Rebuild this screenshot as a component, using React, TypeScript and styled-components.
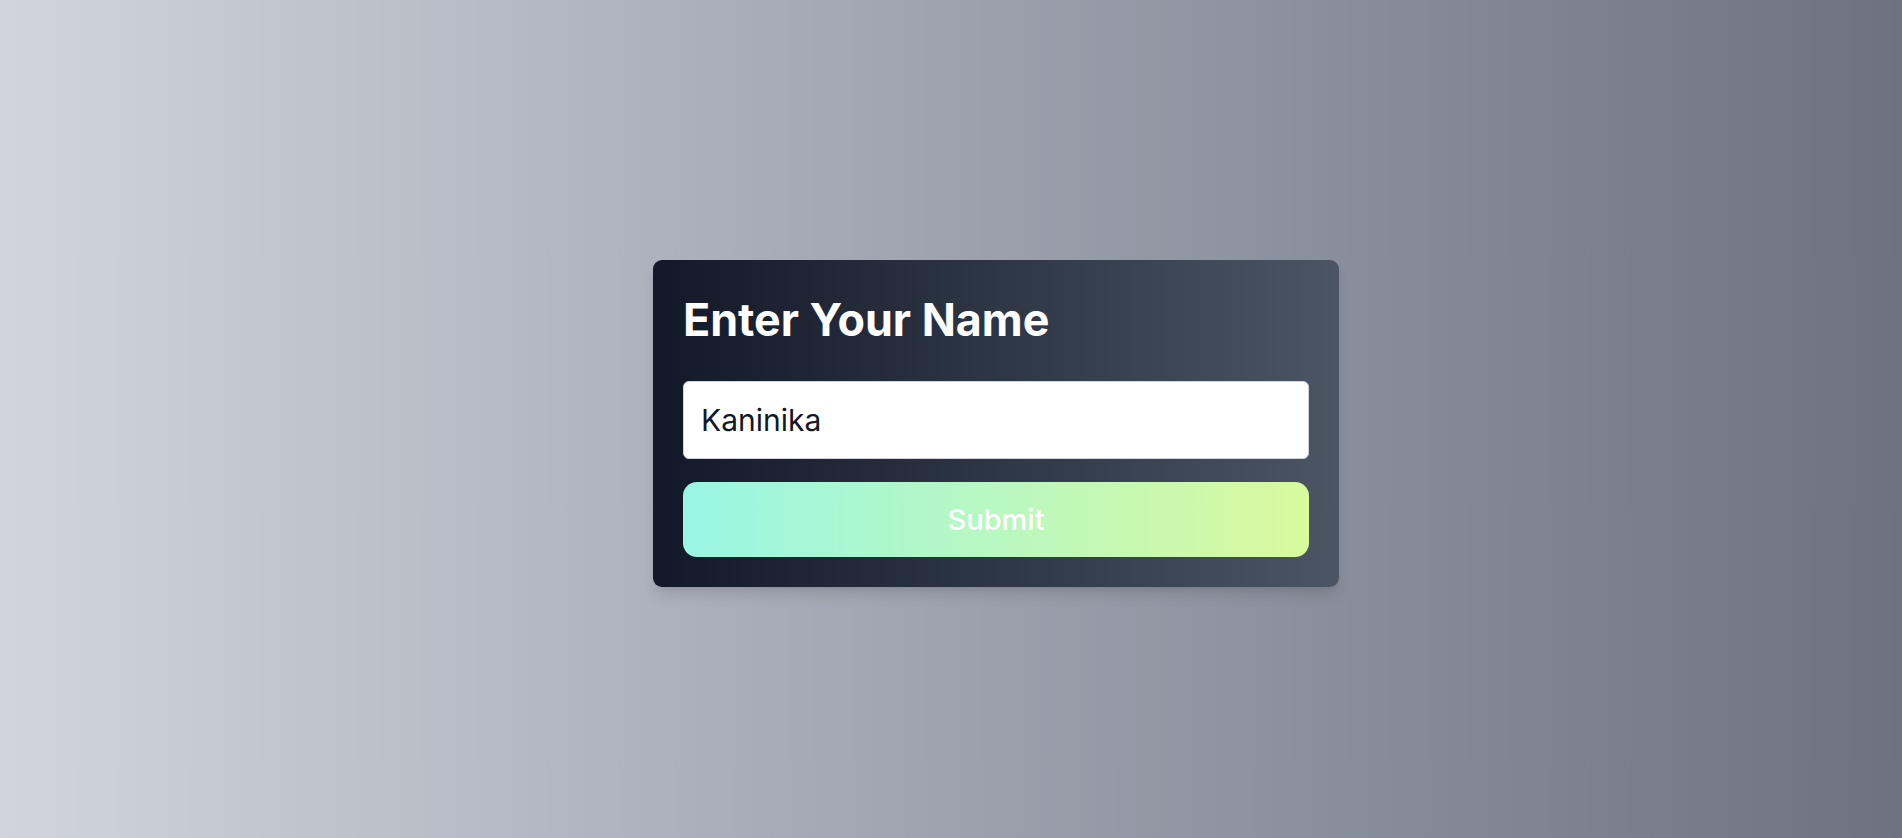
import React, { useState } from "react";
import styled, { createGlobalStyle } from "styled-components";

const GlobalStyle = createGlobalStyle`
  html, body { margin: 0; padding: 0; }
  body { font-family: Inter, "Noto Sans", sans-serif; }
  * { box-sizing: border-box; }
`;

const Page = styled.div`
  min-height: 100vh;
  display: flex;
  align-items: center;
  justify-content: center;
  padding: 9px 0 0 90px;
  background: linear-gradient(to right, #d1d5db, #9ca3af 50%, #6b7280);
`;

const Card = styled.form`
  width: 686px;
  padding: 30px;
  border-radius: 9px;
  background: linear-gradient(to right, #111827, #4b5563);
  box-shadow: 0 10px 15px -3px rgba(0, 0, 0, 0.12), 0 4px 6px -4px rgba(0, 0, 0, 0.1);
  display: flex;
  flex-direction: column;
`;

const Title = styled.h1`
  margin: 0 0 30px;
  font-size: 44.8px;
  line-height: 61px;
  font-weight: 700;
  color: #ffffff;
`;

const Input = styled.input`
  height: 78px;
  width: 100%;
  padding: 0 17px;
  border: 1px solid #d1d5db;
  border-radius: 6px;
  background: #ffffff;
  font-family: Inter, sans-serif;
  font-size: 30px;
  color: #111827;
  outline: none;
`;

const Button = styled.button`
  margin-top: 23px;
  height: 75px;
  width: 100%;
  border: none;
  border-radius: 14px;
  background: linear-gradient(to right, #99f6e4, #d9f99d);
  color: #ffffff;
  font-family: Inter, sans-serif;
  font-size: 29px;
  font-weight: 500;
  cursor: pointer;
`;

export default function App() {
  const [name, setName] = useState("Kaninika");
  return (
    <>
      <GlobalStyle />
      <Page>
        <Card onSubmit={(e) => e.preventDefault()}>
          <Title>Enter Your Name</Title>
          <Input value={name} onChange={(e) => setName(e.target.value)} />
          <Button type="submit">Submit</Button>
        </Card>
      </Page>
    </>
  );
}
